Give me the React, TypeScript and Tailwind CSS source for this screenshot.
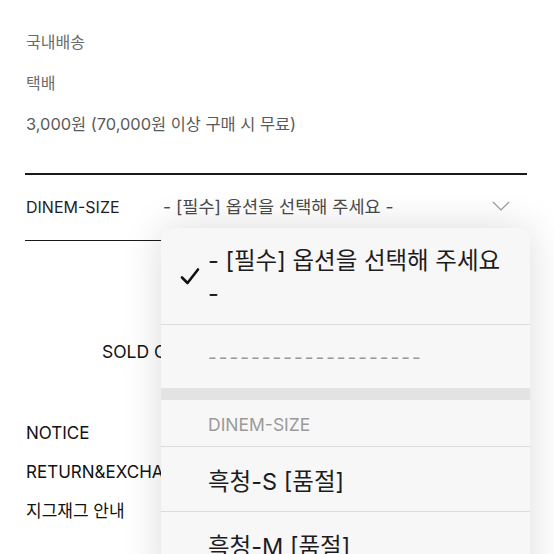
import React from 'react';

const FONT = "font-['Inter','Noto_Sans_CJK_KR',sans-serif]";

// ── Check mark ──
const Check = () => (
  <svg width="20" height="20" viewBox="0 0 20 20" fill="none">
    <path d="M2 11.5 L7.5 17 L18 3.5" stroke="#111" strokeWidth="2.6" strokeLinecap="round" strokeLinejoin="round" />
  </svg>
);

// ── Chevron ──
const Chevron = () => (
  <svg width="18" height="10" viewBox="0 0 18 10" fill="none">
    <path d="M1 1 L9 9 L17 1" stroke="#9a9a9a" strokeWidth="1.2" />
  </svg>
);

const OptionRow = ({ label }: { label: string }) => (
  <div className="flex items-center pl-[47px] pt-[5px] border-b border-[#dcdcdc] h-[65px]">
    <span className="text-[23.5px] leading-none text-[#1c1c1c]">{label}</span>
  </div>
);

export default function App() {
  return (
    <div className={`relative w-[554px] h-[554px] overflow-hidden bg-white ${FONT}`}>
      {/* ── Shipping info ── */}
      <div className="pl-[25px] pr-[27px] pt-[22px]">
        <div className="h-[41px] leading-[41px] pl-px text-[16px] text-[#6b6b6b]">국내배송</div>
        <div className="h-[41px] leading-[41px] pl-px text-[16px] text-[#6b6b6b]">택배</div>
        <div className="h-[41px] leading-[41px] pl-px text-[16.4px] text-[#5a5a5a]">3,000원 (70,000원 이상 구매 시 무료)</div>

        {/* ── Option select ── */}
        <div className="mt-[28px] h-[1.5px] bg-[#1a1a1a]" />
        <div className="flex items-center h-[65px] pl-px">
          <span className="w-[137px] text-[16px] text-[#1e1e1e]">DINEM-SIZE</span>
          <span className="flex-1 text-[17.5px] text-[#4a4a4a]">- [필수] 옵션을 선택해 주세요 -</span>
          <span className="mr-[17px] mt-[-2px]">
            <Chevron />
          </span>
        </div>
        <div className="h-[1.5px] bg-[#1a1a1a]" />

        {/* ── Sold out button ── */}
        <div className="mt-[99px] h-[24px] leading-[24px] pl-[77px] text-[17.5px] text-[#111]">SOLD OUT</div>

        {/* ── Links ── */}
        <div className="flex flex-col mt-[50px] pl-px text-[17px] text-[#111]">
          <div className="h-[39px] leading-[39px]">NOTICE</div>
          <div className="h-[39px] leading-[39px]">RETURN&amp;EXCHANGE</div>
          <div className="h-[38px] leading-[38px]">지그재그 안내</div>
        </div>
      </div>

      {/* ── Dropdown panel ── */}
      <div className="absolute left-[161px] top-[228px] w-[369px] h-[360px] rounded-t-[12px] bg-[#f7f7f7] shadow-[0_0_40px_rgba(0,0,0,0.14)]">
        <div className="flex items-center h-[97px] border-b border-[#dcdcdc] pl-[19px] pb-[1px]">
          <Check />
          <div className="ml-[8px] pt-[2px] text-[23.5px] leading-[33px] text-[#1c1c1c]">
            <div>- [필수] 옵션을 선택해 주세요</div>
            <div>-</div>
          </div>
        </div>
        <div className="flex items-center h-[63px] pl-[47px] pt-[4px]">
          <span className="text-[19px] tracking-[2px] text-[#9a9a9a]">--------------------</span>
        </div>
        <div className="h-[12px] bg-[#e3e3e3]" />
        <div className="flex items-center h-[47px] pl-[47px] pt-[5px] border-b border-[#dcdcdc]">
          <span className="text-[17.5px] text-[#9a9a9a]">DINEM-SIZE</span>
        </div>
        <OptionRow label="흑청-S [품절]" />
        <OptionRow label="흑청-M [품절]" />
      </div>
    </div>
  );
}
